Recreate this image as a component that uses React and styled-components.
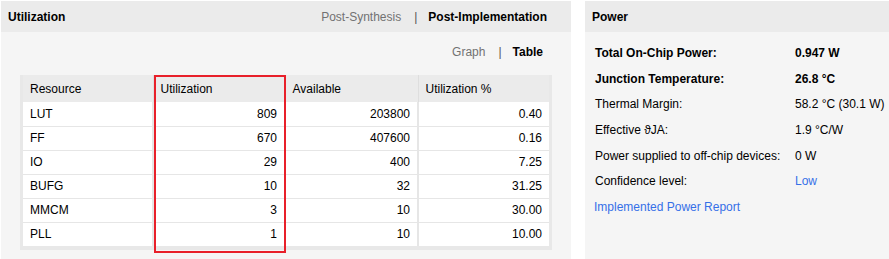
import React from "react";
import styled, { createGlobalStyle } from "styled-components";

const GlobalStyle = createGlobalStyle`
  html, body {
    margin: 0;
    padding: 0;
    background: #ffffff;
  }
  body {
    font-family: "Liberation Sans", Arial, sans-serif;
    font-size: 12px;
    color: #000;
  }
`;

const resources = [
  { name: "LUT", used: 809, available: 203800, pct: "0.40" },
  { name: "FF", used: 670, available: 407600, pct: "0.16" },
  { name: "IO", used: 29, available: 400, pct: "7.25" },
  { name: "BUFG", used: 10, available: 32, pct: "31.25" },
  { name: "MMCM", used: 3, available: 10, pct: "30.00" },
  { name: "PLL", used: 1, available: 10, pct: "10.00" },
];

const power = [
  { label: "Total On-Chip Power:", value: "0.947 W", bold: true },
  { label: "Junction Temperature:", value: "26.8 °C", bold: true },
  { label: "Thermal Margin:", value: "58.2 °C (30.1 W)" },
  { label: "Effective ϑJA:", value: "1.9 °C/W" },
  { label: "Power supplied to off-chip devices:", value: "0 W" },
  { label: "Confidence level:", value: "Low", link: true },
];

export default function App() {
  return (
    <>
      <GlobalStyle />
      <Page>
        <Panel $width={570}>
          <Header>
            <Title>Utilization</Title>
            <Tabs>
              <Tab>Post-Synthesis</Tab>
              <Sep>|</Sep>
              <Tab $active>Post-Implementation</Tab>
            </Tabs>
          </Header>
          <Toolbar>
            <Tab>Graph</Tab>
            <Sep>|</Sep>
            <Tab $active>Table</Tab>
          </Toolbar>
          <TableWrap>
            <Table>
              <thead>
                <tr>
                  <Th $w={130}>Resource</Th>
                  <Th $w={132}>Utilization</Th>
                  <Th $w={133}>Available</Th>
                  <Th $w={131}>Utilization %</Th>
                </tr>
              </thead>
              <tbody>
                {resources.map((r) => (
                  <tr key={r.name}>
                    <Td>{r.name}</Td>
                    <Td $num>{r.used}</Td>
                    <Td $num>{r.available}</Td>
                    <Td $num>{r.pct}</Td>
                  </tr>
                ))}
              </tbody>
            </Table>
            <Highlight />
          </TableWrap>
        </Panel>

        <Panel $width={304}>
          <Header>
            <Title>Power</Title>
          </Header>
          <PowerList>
            {power.map((p) => (
              <PowerRow key={p.label} $bold={p.bold}>
                <span>{p.label}</span>
                {p.link ? <Link>{p.value}</Link> : <span>{p.value}</span>}
              </PowerRow>
            ))}
            <ReportLink>Implemented Power Report</ReportLink>
          </PowerList>
        </Panel>
      </Page>
    </>
  );
}

const Page = styled.div`
  display: flex;
  gap: 14px;
  padding: 1px 0 0 1px;
  height: 258px;
`;

const Panel = styled.div`
  width: ${(p) => p.$width}px;
  background: #f5f5f5;
  display: flex;
  flex-direction: column;
`;

const Header = styled.div`
  height: 31px;
  background: #ebebeb;
  display: flex;
  align-items: center;
  justify-content: space-between;
  padding: 0 24px 0 7px;
`;

const Title = styled.div`
  font-weight: bold;
`;

const Tabs = styled.div`
  display: flex;
  align-items: center;
`;

const Tab = styled.span`
  color: ${(p) => (p.$active ? "#000" : "#727272")};
  font-weight: ${(p) => (p.$active ? "bold" : "normal")};
`;

const Sep = styled.span`
  color: #555;
  margin: 0 11px 0 13px;
`;

const Toolbar = styled.div`
  display: flex;
  justify-content: flex-end;
  align-items: center;
  height: 40px;
  padding-right: 28px;
  margin-bottom: 3px;
`;

const TableWrap = styled.div`
  position: relative;
  align-self: flex-start;
  margin-left: 19px;
  background: #e8e8e8;
  padding: 0 3px 4px 3px;
`;

const Table = styled.table`
  border-collapse: collapse;
  table-layout: fixed;
`;

const Th = styled.th`
  width: ${(p) => p.$w}px;
  height: 27px;
  padding: 1px 7px 0;
  box-sizing: border-box;
  text-align: left;
  font-weight: normal;
  background: #ebebeb;
  border-left: 1px solid #dedede;
  &:first-child {
    border-left: none;
  }
`;

const Td = styled.td`
  height: 24px;
  padding: 0 7px;
  box-sizing: border-box;
  background: #fff;
  text-align: ${(p) => (p.$num ? "right" : "left")};
  border-left: 2px solid #e6e6e6;
  border-top: 1px solid #e6e6e6;
  &:first-child {
    border-left: none;
  }
  tr:first-child > & {
    border-top: none;
  }
`;

const Highlight = styled.div`
  position: absolute;
  left: 134px;
  top: 0;
  width: 132px;
  height: 178px;
  border: 2px solid #e8202a;
  box-sizing: border-box;
  pointer-events: none;
`;

const PowerList = styled.div`
  display: flex;
  flex-direction: column;
  padding: 8px 0 0 10px;
`;

const PowerRow = styled.div`
  display: grid;
  grid-template-columns: 200px 1fr;
  align-items: center;
  height: 25.7px;
  font-weight: ${(p) => (p.$bold ? "bold" : "normal")};
`;

const Link = styled.span`
  color: #3670e8;
`;

const ReportLink = styled.span`
  color: #3670e8;
  margin-left: -1px;
  height: 25.7px;
  display: flex;
  align-items: center;
`;
